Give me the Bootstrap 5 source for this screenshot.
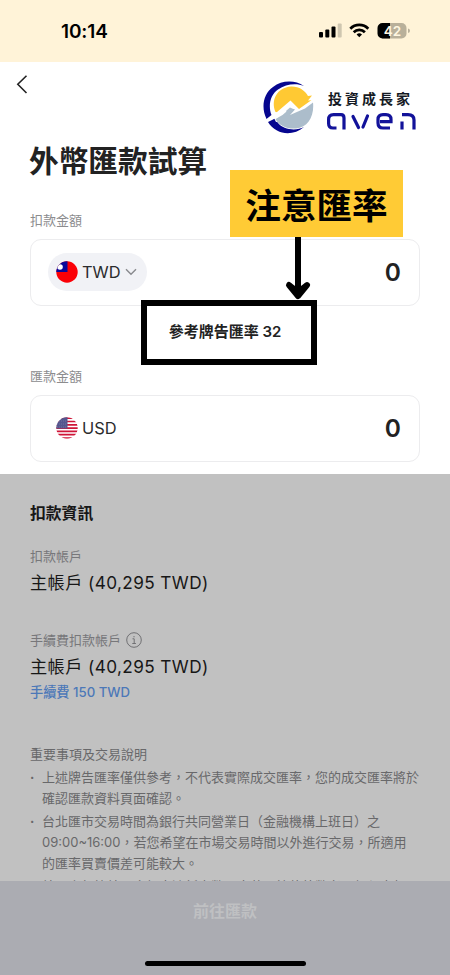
<!DOCTYPE html>
<html lang="zh-Hant">
<head>
<meta charset="utf-8">
<meta name="viewport" content="width=device-width, initial-scale=1">
<title>外幣匯款試算</title>
<link href="https://cdn.jsdelivr.net/npm/bootstrap@5.3.0/dist/css/bootstrap.min.css" rel="stylesheet">
<style>
body{font-family:Inter,"Noto Sans CJK TC",sans-serif;color:#222;background:#fff}
.phone{width:450px;height:975px}
.status{height:62px;background:#fff3d8;padding:0 40px 0 61px;color:#000}
.clock{font-size:19px;font-weight:600;line-height:62px;letter-spacing:-.1px;padding-top:1px}
.form-area{height:412px;padding:0 30px}
.topbar{height:77px}
.back{margin:13px 0 0 -14px}
.brand{margin:18px 3px 0 0;height:54px;gap:13px}
.brand-name{font-size:14px;font-weight:700;letter-spacing:3px;line-height:16px;color:#151a24;white-space:nowrap;margin:11px 0 0 1px}
.wordmark{margin-top:5px}
.title{font-size:29.7px;font-weight:700;line-height:44px;margin:0 0 0 -1px}
.lbl{font-size:13px;line-height:20px;color:#8c8c8e}
.lbl-from{padding:27px 0 9px}
.lbl-to{padding-bottom:9px}
.amount{height:67px;border:1px solid #ececee;border-radius:11px;padding:0 18px 1px 17px;background:#fff}
.pill{height:38px;width:99px;border-radius:19px;background:#f1f2f6;padding-left:8px;gap:4px}
.plain{padding-left:8px;gap:4px}
.cur{font-size:16.4px;line-height:24px;color:#2b2b2d}
.zero{font-size:24.5px;font-weight:600;line-height:30px;padding-bottom:1px}
.rate-row{height:60px}
.tag{left:230px;top:170px;width:173px;height:67px;background:#ffcb35;color:#000;font-size:35.6px;font-weight:700;padding-top:6px}
.arrow{left:284px;top:237px}
.ratebox{left:141px;top:300px;width:176px;height:65px;border:6px solid #000;background:#fff;font-size:15px;font-weight:600;padding-right:8px;white-space:nowrap}
.info{height:407px;background:#c1c1c1;padding:28px 30px 0;overflow:hidden;color:#171717}
.info .lbl{color:#77777a}
.sec{font-size:15.8px;font-weight:700;line-height:24px;margin:0 0 20px}
.acct{font-size:17.2px;line-height:26px;letter-spacing:.4px;margin-top:4px}
.lbl-fee{margin-top:34px;gap:5px}
.fee{font-size:13.2px;line-height:20px;color:#4c78b8;font-weight:500;margin-top:2px}
.notes{font-size:13px;line-height:21px;color:#68686a;margin-top:42px}
.notes-head{margin-bottom:2px}
.notes ul{list-style:none;padding:0;margin:0}
.notes li{padding-left:12px;margin-bottom:2px;white-space:nowrap;text-indent:-12px}
.notes li span{display:inline-block;width:12px;text-indent:0}
.notes li .dot{font-weight:700}
.notes li div{text-indent:0}
.foot{height:94px;background:#abacb2;padding-top:18px}
.go{font-size:16px;font-weight:700;line-height:24px;color:#bfc0c2}
.homebar{width:161px;height:5px;border-radius:3px;background:#000;margin-top:38px}
</style>
<script src="https://cdn.jsdelivr.net/npm/bootstrap@5.3.0/dist/js/bootstrap.bundle.min.js"></script>
</head>
<body>
<div class="phone position-relative overflow-hidden">
  <header class="status d-flex justify-content-between align-items-center">
    <span class="clock">10:14</span>
    <svg width="92" height="18" viewBox="0 0 92 18">
      <rect x="1" y="10" width="4" height="5.5" rx="1"/><rect x="7.3" y="7.5" width="4" height="8" rx="1"/><rect x="13.5" y="4.5" width="4" height="11" rx="1"/><rect x="19.7" y="1.5" width="4" height="14" rx="1" fill="#cfc6b0"/>
      <g fill="none" stroke="#000" stroke-width="2.7"><path d="M32.3 6.7a12.6 12.6 0 0 1 18 0"/><path d="M35.7 10.3a7.9 7.9 0 0 1 11.200 0"/></g>
      <path d="M41.300 15.300l-2.700-2.800a3.900 3.900 0 0 1 5.400 0z"/>
      <path d="M64 1h19.500a5 5 0 0 1 5 5v5.500a5 5 0 0 1-5 5H64z" fill="#b9b09a"/><path d="M72 1h-7.500a5 5 0 0 0-5 5v5.500a5 5 0 0 0 5 5H72z"/>
      <path d="M90 6.500q2 .5 2 2.300t-2 2.300z" fill="#b9b09a"/>
      <text x="74.500" y="13.500" text-anchor="middle" font-family="Inter,sans-serif" font-size="13.500" font-weight="600" fill="#fff6e0">42</text>
    </svg>
  </header>

  <main class="form-area">
    <div class="topbar d-flex justify-content-between align-items-start">
      <svg class="back" width="14" height="20" viewBox="0 0 14 20" fill="none" stroke="#222" stroke-width="1.600"><path d="M10.500 0.800L1.800 9.300l8.700 8.700"/></svg>
      <div class="brand d-flex">
        <svg width="52" height="54" viewBox="0 0 52 54">
          <path d="M42 6C33 0 20 0 11 7 1 14-1 28 4.500 39l5-4C6 26 8 15 16 9.500 24 4 34 3 42 6z" fill="#06068f"/>
          <path d="M6 42l7-3.500c3 6 8 9.500 14 10.500 6 1 11 0 15-2-8 7-19 8-27 3.500C11 48.500 8 45.500 6 42z" fill="#06068f"/>
          <path d="M13.500 32C8.500 20 15 7.500 29 6.500c8-.3 14 4 17 9.500l4-.5-4 5 4-.2-8 8.200-5 5H22z" fill="#ffc933"/>
          <path d="M1 42L15 32 28.500 20.500 37 29l14-10v8L36 40 14 42l-2-4z" fill="#fff"/>
          <path d="M13.500 39l9.500-8 5-3.500 5 2-5 5.500 8-3.500 7-3 8-6c1.500 13-5 25-17 26-9 .7-17-3-20.500-9.500z" fill="#acbdcb"/>
          <path d="M12.500 38l16-14 4 4.500-5 .5-7 6-7 4z" fill="#fff"/>
          <path d="M24 31l4-3.500 3.500 1.800L26 34z" fill="#acbdcb"/>
        </svg>
        <div>
          <div class="brand-name">投資成長家</div>
          <svg class="wordmark d-block" width="90" height="20" viewBox="0 0 90 20" fill="none" stroke="#12129a" stroke-width="3.200">
            <path d="M9.500 16H6Q1.600 16 1.600 11.500V7.500Q1.600 2.600 6.500 2.600H14Q17 2.600 17 6v11.500"/>
            <path d="M26 4.500l5.500 11M40.500 4l-4.500 11" stroke-linecap="round"/>
            <path d="M53 9.600h11V7.500q0-4.900-5-4.900h-3q-5 0-5 4.900v3.500q0 5 5 5h7"/>
            <path d="M75 17.500v-8M75 2.600h6q6 0 6 5.400v9.500"/>
          </svg>
        </div>
      </div>
    </div>
    <h1 class="title">外幣匯款試算</h1>
    <div class="lbl lbl-from">扣款金額</div>
    <div class="amount d-flex justify-content-between align-items-center">
      <div class="pill d-flex align-items-center">
        <svg width="22" height="22" viewBox="0 0 22 22"><defs><clipPath id="c"><circle cx="11" cy="11" r="10.700"/></clipPath></defs><g clip-path="url(#c)"><path fill="#fb0007" d="M0 0h22v22H0z"/><path fill="#08089c" d="M0 0h11.500v11H0z"/><circle cx="4" cy="6" r="2.800" fill="#fff"/></g></svg>
        <span class="cur">TWD</span>
        <svg width="12" height="8" viewBox="0 0 12 8" fill="none" stroke="#88898d" stroke-width="1.400"><path d="M1 1.300l5 5 5-5"/></svg>
      </div>
      <span class="zero">0</span>
    </div>
    <div class="rate-row"></div>
    <div class="lbl lbl-to">匯款金額</div>
    <div class="amount d-flex justify-content-between align-items-center">
      <div class="plain d-flex align-items-center">
        <svg width="22" height="22" viewBox="0 0 22 22"><g clip-path="url(#c)"><path fill="#fff" d="M0 0h22v22H0z"/><path stroke="#cf1538" stroke-width="1.700" d="M0 1.200h22M0 4.500h22M0 7.800h22M0 11.100h22M0 14.400h22M0 17.700h22M0 21h22"/><path fill="#55568e" d="M0 0h11.500v11.500H0z"/><path d="M1 4h10M1 7h10M1 10h10" stroke="#8586b0" stroke-width=".6" stroke-dasharray="1 1"/></g></svg>
        <span class="cur">USD</span>
      </div>
      <span class="zero">0</span>
    </div>
  </main>

  <section class="info">
    <h2 class="sec">扣款資訊</h2>
    <div class="lbl">扣款帳戶</div>
    <div class="acct">主帳戶 (40,295 TWD)</div>
    <div class="lbl lbl-fee d-flex align-items-center">手續費扣款帳戶
      <svg width="16" height="16" viewBox="0 0 16 16" fill="none" stroke="#707073"><circle cx="8" cy="8" r="7.300"/><path d="M6.500 6.800H8.200v4.700M6.300 11.500h3.600M8 4v1.300"/></svg>
    </div>
    <div class="acct">主帳戶 (40,295 TWD)</div>
    <div class="fee">手續費 150 TWD</div>
    <div class="notes">
      <div class="notes-head">重要事項及交易說明</div>
      <ul>
        <li><span class="dot">·</span>上述牌告匯率僅供參考，不代表實際成交匯率，您的成交匯率將於<div>確認匯款資料頁面確認。</div></li>
        <li><span class="dot">·</span>台北匯市交易時間為銀行共同營業日（金融機構上班日）之<div>09:00~16:00，若您希望在市場交易時間以外進行交易，所適用</div><div>的匯率買賣價差可能較大。</div></li>
        <li><span class="dot">·</span>結匯人每筆結匯金額未達新臺幣五十萬元等值外幣者，無須申報</li>
      </ul>
    </div>
  </section>

  <footer class="foot d-flex flex-column align-items-center">
    <div class="go">前往匯款</div>
    <div class="homebar"></div>
  </footer>

  <div class="tag position-absolute d-flex align-items-center justify-content-center">注意匯率</div>
  <svg class="arrow position-absolute" width="28" height="64" viewBox="0 0 28 64" fill="none" stroke="#000" stroke-width="6"><path d="M14 0v56"/><path fill="#000" d="M5 48l9 11 9-11-9 7z" stroke-linecap="round" stroke-linejoin="round"/></svg>
  <div class="ratebox position-absolute d-flex align-items-center justify-content-center">參考牌告匯率 32</div>
</div>
</body>
</html>
